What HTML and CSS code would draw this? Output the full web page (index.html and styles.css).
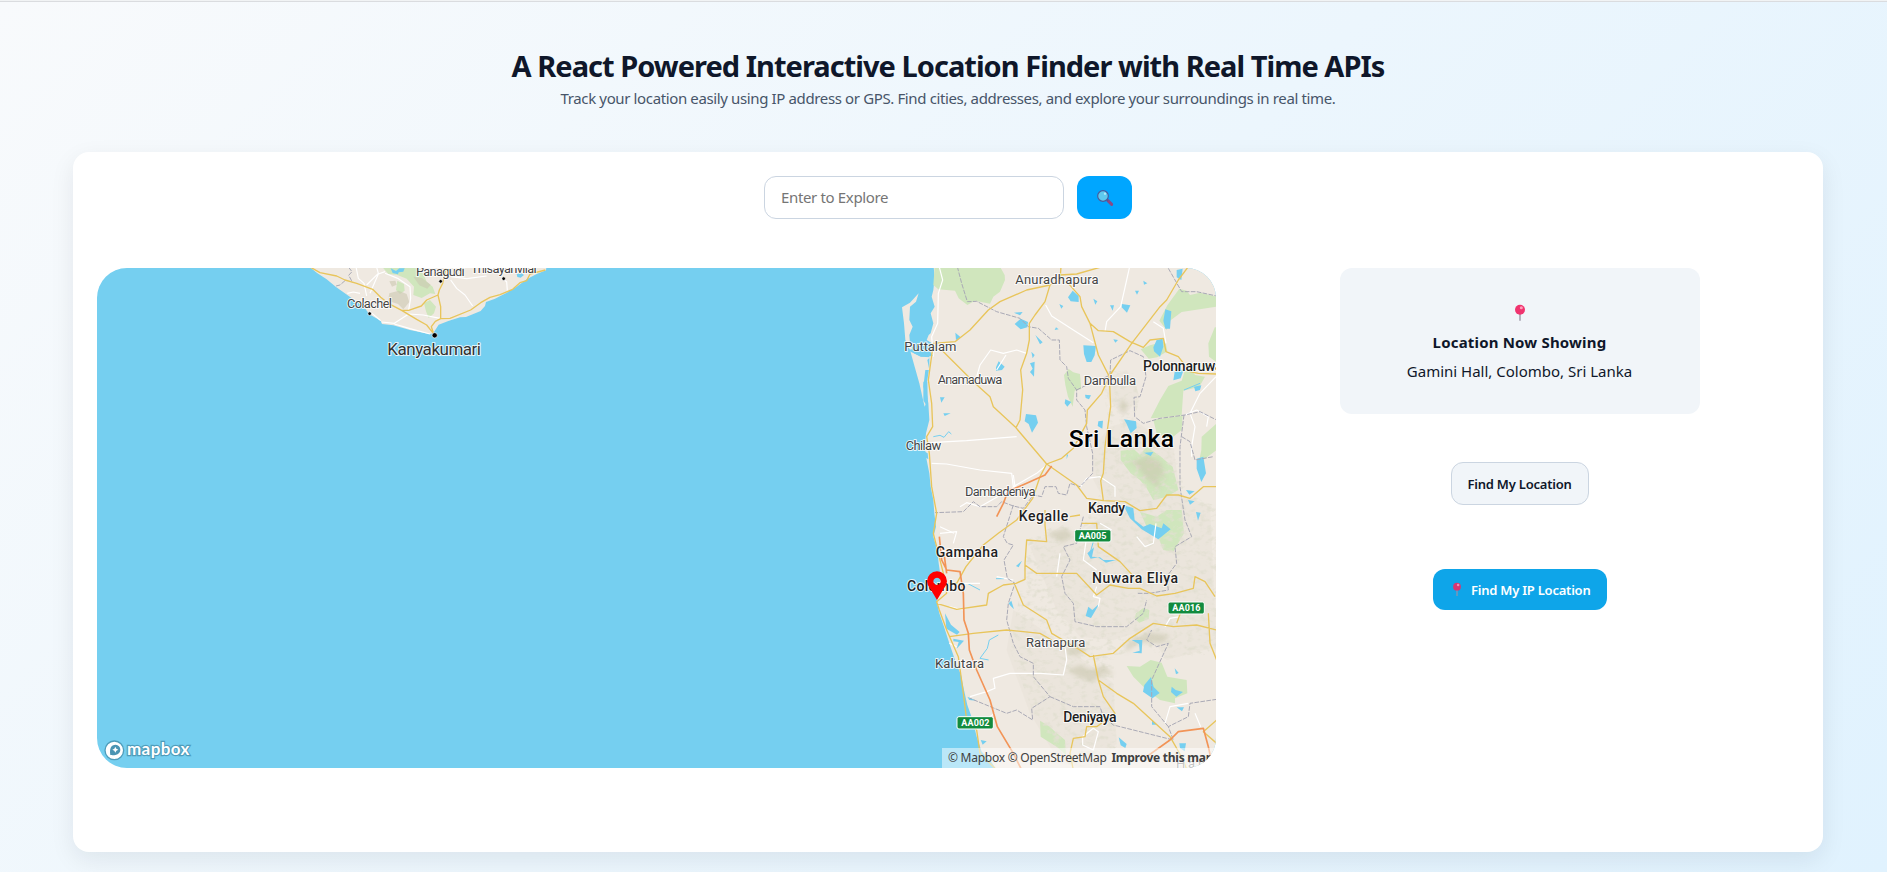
FILE: index.html
```html
<!DOCTYPE html>
<html lang="en">
<head>
<meta charset="utf-8">
<title>Location Finder</title>
<link rel="stylesheet" href="styles.css">
</head>
<body>
<main class="page">
  <header class="hero">
    <h1 class="hero-title">A React Powered Interactive Location Finder with Real Time APIs</h1>
    <p class="hero-sub">Track your location easily using IP address or GPS. Find cities, addresses, and explore your surroundings in real time.</p>
  </header>
  <section class="card">
    <form class="search">
      <input class="search-input" type="text" placeholder="Enter to Explore">
      <button class="search-btn" type="button" aria-label="Search">
        <svg width="18" height="18" viewBox="0 0 54 54"><path d="M35 34L47 46" stroke="#8a4a86" stroke-width="9" stroke-linecap="round"/><path d="M30 30l6 6" stroke="#4b5a98" stroke-width="4"/><circle cx="21" cy="21" r="16" fill="#5fc9ee" stroke="#4a5c9c" stroke-width="3.5"/><circle cx="27" cy="14" r="3.5" fill="#b5ecfb"/></svg>
      </button>
    </form>
    <div class="content">
      <div class="map">
        <svg class="map-canvas" width="1119" height="500" viewBox="0 0 1119 500">
          <defs>
            <filter id="soft" x="-20%" y="-20%" width="140%" height="140%"><feGaussianBlur stdDeviation="6"/></filter>
            <filter id="relief" x="0" y="0" width="100%" height="100%">
              <feTurbulence type="fractalNoise" baseFrequency=".05 .07" numOctaves="3" seed="8"/>
              <feColorMatrix values="0 0 0 0 .76  0 0 0 0 .74  0 0 0 0 .64  3 0 0 0 -1.45"/>
              <feComposite in2="SourceGraphic" operator="in"/>
            </filter>
          </defs>

          <!-- Southern India -->
          <g transform="translate(-37 -138) scale(.333333)">
            <path class="land" d="M748 410L770 428 800 448 828 471 862 495 890 515 915 535 928 553 962 572 966 582 1000 586 1050 600 1112 613 1122 606 1136 584 1165 573 1200 562 1218 561 1240 552 1262 543 1275 528 1278 516 1305 506 1340 488 1370 470 1400 448 1430 432 1458 421 1460 405Z"/>
            <path class="park" d="M966 410L985 432 1010 434 1040 446 1062 470 1060 495 1085 504 1110 490 1126 492 1118 470 1100 455 1090 432 1074 410ZM1012 452l20 10 2 20-14 10-12-12zM1092 520l18-10 18 20-6 20-16 14-8-20z"/>
            <path class="hill" d="M988 490l28-8 24 10 8 24-18 22-16-16-30-10zM1060 440l26 4 26 20-10 12-24-10zM988 454l18-2 4 12-14 6z"/>
            <path class="water" d="M992 415l16 8 10-8 16 0-4 10-14 2-2 6-16-4zM1370 432l14-3 8 6-10 8-10-2z"/>
            <path class="minor" d="M888 410L895 445 912 460 920 498M920 465L955 430 950 412M930 490L955 432 975 425M862 490L880 486 900 490M975 430L1015 446 1050 470 1052 505 1046 540M930 545L962 572M965 576L1003 580 1046 552M1003 582L1050 596 1110 612M1140 565L1090 555 1046 552M1172 450L1190 475 1215 495 1238 528M1174 440L1220 446 1280 438M1325 445L1340 455 1342 482"/>
            <path class="border" d="M866 412L876 425 866 436 878 458M855 452L840 465 828 468"/>
            <path class="road" d="M752 412L780 428 830 438 855 450 890 460 938 478 962 502 985 520 1025 541 1070 568 1100 585 1120 610M1158 412L1148 460 1138 480 1134 495 1142 530 1142 568M1134 495L1100 510 1084 528 1046 541 1025 541M1120 608L1114 590 1126 574 1142 566 1170 565 1232 540 1262 518 1290 502 1320 494 1358 478 1380 458 1400 452 1410 432 1456 420"/>
            <g class="dots"><circle cx="1142" cy="454" r="5.5"/><circle cx="1331" cy="446" r="5.5"/><circle cx="929" cy="551" r="5.5"/><circle cx="1124" cy="616" r="8"/></g>
            <g class="town">
              <text x="1068" y="438" textLength="146">Panagudi</text>
              <text x="1232" y="429" textLength="198">Thisayanvilai</text>
              <text x="861" y="535" textLength="135">Colachel</text>
              <text class="place-lg" x="982" y="675" textLength="281">Kanyakumari</text>
            </g>
          </g>

          <!-- Sri Lanka, drawn in one continuous coordinate space -->
          <g transform="translate(783 -8) scale(.333333)">
            <path class="land" d="M160 10L164 55 160 90 155 110 164 140 152 160 160 190 152 220 146 225 140 240 160 252 148 285 148 320 142 360 138 385 145 430 148 480 138 520 134 560 140 600 148 640 152 680 160 720 163 760 168 800 160 830 172 870 176 910 182 950 176 990 170 1025 178 1060 192 1100 208 1150 225 1200 243 1245 252 1290 262 1335 278 1380 290 1430 305 1475 330 1500 350 1530 1015 1530 1015 10Z"/>
            <path class="land" d="M116 100L108 125 90 140 88 180 98 200 88 225 90 250 102 280 125 290 150 292 142 300 148 330 136 330 130 380 142 420 134 440 128 415 118 370 104 320 90 270 76 240 72 190 66 142 90 128Z"/>
            <g class="hills">
              <path d="M690 500L760 480 880 560 900 700 990 740 1010 1160 860 1200 800 1110 700 1140 600 1130 530 1050 450 860 540 800 600 820 690 750 640 660 640 560Z"/>
              <path d="M400 1050L560 1160 700 1270 710 1450 650 1530 540 1510 450 1360 380 1170Z"/>
              <path d="M690 350l50-20 40 80-50 60-50-60z"/>
            </g>
            <path class="park" d="M164 20L160 75 175 88 225 92 236 115 262 135 285 122 330 131 340 110 360 95 375 60 374 45 360 20ZM1010 110L1008 140 905 156 868 184 860 210 838 182 862 136 898 86 920 92 930 105 960 98ZM782 268l28-12 46-12 6 30-30 18-26 4zM812 475L840 420 865 378 905 362 915 330 930 320 945 345 975 350 958 380 910 392 905 465 842 473ZM820 480L908 466 905 510 870 538 830 520ZM985 250l20-50 10 10v100l-28-20zM965 530l45-40v80l-40 30-16 20 10-50zM552 345l14-18 14 10 20 5 4 45-20 5-6 48-14-30-8-35z"/>
            <path class="park" d="M722 572L762 568 780 584 800 560 840 588 878 620 888 660 895 690 860 710 820 720 800 685 780 660 752 640 722 600ZM780 755L830 770 860 750 905 750 912 820 880 875 850 870 830 820 800 800ZM768 1060l22-16 18 6-2 26-28 12-14-12zM740 1218L780 1220 812 1200 845 1208 862 1250 920 1260 922 1300 885 1315 885 1330 840 1320 800 1290 760 1250ZM480 1382L510 1400 525 1415 555 1440 558 1485 530 1460 482 1430Z"/>
            <path filter="url(#relief)" d="M690 330L760 340 780 420 760 480 880 560 920 700 1010 740 1010 1180 860 1200 780 1150 700 1200 710 1460 640 1530 560 1510 460 1360 390 1170 430 940 440 840 540 790 600 820 660 700 640 600 690 500 670 400Z"/>
            <path class="shade" d="M745 610l60-22 40 20 10 55-20-20 5 45-40-30-35-45M720 420l24 10-10 30-14-10M560 1230l40-15 32 14 40-12 30 24-38 4-28 22-40-16zM500 820l60-14 20 22-34 20M590 1150l34 15-30 24-44-14zM740 1150l60-34 70 10-20 22-70 0-44 28z" filter="url(#soft)"/>
            <path class="water" d="M82 270l40 20 38-2-20-26zM348 322l8-18 18 16-8 10-18 2zM402 158l26-2-8 10zM404 192l18-16 22 10-2 16-20 6zM466 225l22 22-8 6zM610 256l38 2-4 28-10 20-14 0-8-24zM564 112l14-20 18 16 0 18-24-2zM725 132l26 4-10 22-16-16zM640 116l12 8-6 10zM538 132l12 6-6 8zM765 92l12 0-6 12zM790 62l12 8-10 4zM690 136l12 0-4 16zM850 182l6-34 18 6-4 52-14 0zM890 30l18-4-4 34-14-8zM820 262l10-22 18-4 2 24-10 30-18-16zM884 335l28-8-10 28-22 6zM942 380l22-4-4 14-14 4zM454 275l10 10-6 10zM450 310l14-5-2 45-12-14 8-10zM438 462l30 4 6 22-18 30-10-26-12-8zM556 418l18 8-12 14-8-10zM615 404l18 2-6 12-10-4zM655 484l14-2-2 24-14-8zM732 478l36 6 2 20-18 16-12-28zM226 218l16 14-14 8zM180 412l14 0-10 16zM190 460l22 0-18 8zM792 578l28-2-8 12zM950 596l20-6 8 50-14 26-14-40zM918 690l26 4-16 10zM924 720l20 4-14 10zM948 756l14 2-8 24zM528 202l8 6-12 2zM700 238l14 2-8 8zM560 580l4 6-4 12zM130 365l12 0 2 80-14-24zM125 570l18 10 2 18-12-8z"/>
            <path class="water" d="M730 735L760 745 764 780 790 800 810 792 845 805 850 790 872 808 835 838 785 808 750 775ZM622 880l20-18-6 28 24 2 10 8 38 0-30 8-24-16-22 4zM625 1040l12 10 22-20-26 44-16-6zM386 1030l8-8 8 26-12-12zM408 918l18-16-10 20zM755 1140l32 0-2 40-28-2 22-6-2-20zM793 1275l20-24 8 30 18 18-22 16-28-20zM884 1225l12 14-8 4zM875 1280l12 10 22 6-20 14-16-14zM890 1342l22 0-6 12zM716 1432l24 20-4 12-14-8zM816 1380l16 14-16 0zM898 1450l20 0-4 24-14-10zM302 1440l18 4-12 10zM195 1060l18 34 26 22-8 8-32-18zM220 1136l32 6-22 24 6-20-16-2zM262 1310l28 12-22-2z"/>
            <g class="stream"><path d="M326 1200L300 1195 322 1165 328 1140 355 1125M262 970L300 990M348 956L372 956M160 530L180 526 192 532 206 515 214 522M630 880L640 845M912 390L960 370M118 25L118 60"/></g>
            <path class="minor" d="M175 10L188 60 175 100 173 190 155 230 160 290M150 548L260 542 410 530M155 610L200 612 300 630 395 640 400 680 470 640 500 615M400 645L405 680 300 740 260 728 240 740M290 350L300 315 332 270 370 280 410 270 440 280M378 285L350 330M290 360M497 135L515 168 580 210 640 248M750 15L740 60 722 140 680 185 675 215M820 185L850 205 858 250M660 650L620 655 602 680M660 650L705 680 705 710M620 830L610 900 650 930M770 830L795 860 820 850 828 790M930 460L945 500 935 560 935 590M1008 350L960 400 930 460M915 465L950 450 985 470 980 500M180 820L230 815 220 850M180 800L222 820M350 950L400 960M300 970L240 970M208 1040L250 1050M208 1150L230 1160M270 1310L320 1295 345 1285 340 1255 390 1240 480 1240 550 1245 560 1200 556 1165M300 1390L345 1360M608 1430L640 1405 655 1415 640 1470 608 1455ZM855 1390L870 1340 925 1330M945 1360L962 1400M660 790L695 810M540 880L530 950M900 1070L870 1075 855 1100M650 980L640 1010 660 1015 655 1040"/>
            <path class="border" d="M232 20L245 70 262 125 290 124 350 155 420 175 445 200 475 205 515 240 538 240 540 300 560 320 565 355 590 390 590 420 615 450 620 500 638 580 638 640 600 680 570 670 560 705 535 700 528 680 495 680 485 710 460 705 430 745 400 738 365 725 350 740 300 740 280 725 250 755 165 758M590 390L630 370 670 355 690 345 692 300 750 272 790 290 798 350 780 410 762 412 764 470 790 490 840 475 915 465 960 455 1010 480M865 25L905 95 950 95 1010 108M905 530L930 545 945 600 1000 590M912 465L900 560 900 680 915 780 935 830 885 860 890 910 860 950 865 990 810 1000 770 1000M400 735L370 830 382 850 400 855 372 900 382 955 405 970 385 1030 380 1080 400 1150 420 1190 460 1210 460 1250 510 1310 455 1345 458 1380 410 1350 380 1360 270 1315M610 770L590 850 550 860 570 900 545 950 555 1000 580 1030 585 1085 650 1100 740 1100 790 1060 800 1020M510 1310L580 1340 660 1340 670 1370 700 1395 760 1410 880 1440 865 1400 925 1370 930 1330 1010 1318M865 1400L815 1340 815 1260 865 1150 830 1160 800 1140 815 1110"/>
            <path class="road" d="M543 20L540 60 510 75 440 90 360 125 325 150 270 210 225 245 160 250M540 45L590 42 660 22M510 75L495 125 465 165 448 190 448 240 440 280 422 330 428 390 420 480 408 503M565 70L600 110 605 140 630 190 655 285 688 350 692 440 675 560 670 640 662 662 670 722M630 190L655 212 700 215 750 245 790 262 810 240 850 235 858 275 895 290 930 335 955 340 1010 342M925 20L895 60 860 120 840 140 755 250 690 345 665 400 622 450 620 490 580 565 545 595 500 612 480 650 458 715 410 780 355 820 310 855 258 920 230 970 205 970M185 270L285 370 330 410 340 440 405 500 500 612 590 675 620 715 670 722 735 725 780 752 830 745 860 705 895 705 930 715 970 680 1010 680M160 250L145 360 155 430 158 500 140 530 148 580 155 680 170 760 160 820 175 880 190 940 200 1000 170 1025 178 1050 200 1110 235 1190 250 1300 260 1380 290 1410 300 1480 350 1530M170 1030L230 1048 320 1035 325 1000 370 975 408 970 435 958 435 910 440 840 500 845 495 795 495 750M435 915L470 940 590 940 650 1005 690 975 745 985 780 985 830 1008 885 1000 940 985 945 950 975 965 1005 1010M605 790L650 790 655 860 720 905 780 970M570 770L600 765M405 975L430 1035 500 1080 515 1120 600 1170 630 1190 700 1180 750 1135 820 1090 880 1100 950 1095 1010 1110M890 1090L905 1050M640 1185L655 1260 710 1300 760 1330 815 1380 870 1430 910 1500 920 1530M655 1260L670 1310 705 1360 650 1400 620 1400 615 1430 580 1435 570 1480 580 1530M208 1130L280 1120 380 1110 480 1120 515 1140M985 1060L990 1150 1010 1200M1010 1380L970 1415 1010 1450"/>
            <path class="trunk" d="M515 618L495 645 440 670 405 685 385 690 370 730 350 770M178 830L185 900 200 930 240 935 250 1000 252 1080 265 1120 268 1170 290 1230 330 1320 352 1400 400 1480 425 1530M192 880L200 940M800 1490L870 1440 895 1415 970 1405 985 1460 1000 1530"/>
            <g class="town">
              <text x="406" y="72" textLength="250">Anuradhapura</text>
              <text x="73" y="272" textLength="156">Puttalam</text>
              <text x="173" y="373" textLength="194">Anamaduwa</text>
              <text x="611" y="374" textLength="157">Dambulla</text>
              <text x="77" y="570" textLength="107">Chilaw</text>
              <text x="255" y="708" textLength="212">Dambadeniya</text>
              <text x="438" y="1160" textLength="178">Ratnapura</text>
              <text x="165" y="1225" textLength="147">Kalutara</text>
              <text class="faint" x="888" y="1525" textLength="100">Ham</text>
            </g>
            <g class="city">
              <text x="789" y="334" textLength="239">Polonnaruwa</text>
              <text x="624" y="759" textLength="111">Kandy</text>
              <text x="416" y="784" textLength="149">Kegalle</text>
              <text x="167" y="891" textLength="187">Gampaha</text>
              <text x="81" y="993" textLength="175">Colombo</text>
              <text x="636" y="970" textLength="258">Nuwara Eliya</text>
              <text x="550" y="1385" textLength="160">Deniyaya</text>
            </g>
            <text class="country" x="566" y="562" textLength="316">Sri Lanka</text>
            <g class="shield">
              <rect x="584" y="809" width="109" height="37" rx="6"/><text x="596" y="837" textLength="83">AA005</text>
              <rect x="864" y="1026" width="109" height="36" rx="6"/><text x="877" y="1053" textLength="84">AA016</text>
              <rect x="231" y="1370" width="109" height="37" rx="6"/><text x="244" y="1398" textLength="84">AA002</text>
            </g>
            <path class="pin" d="M171 1020L150 985Q141 974 141 964A30 30 0 0 1 201 964Q201 974 192 985ZM171 953a11 11 0 1 0 .1 0z"/>
          </g>

          <!-- Mapbox wordmark -->
          <g class="logo" transform="translate(-17 432) scale(.333333)">
            <circle class="logo-ring" cx="103" cy="151" r="28"/>
            <path class="logo-mark" d="M91 165C88 145 93 134 107 134A15 15 0 0 1 121 149C121 162 107 167 91 165Z"/>
            <path class="logo-star" d="M106 140l3 6 6 3-6 3-3 6-3-6-6-3 6-3z"/>
            <text x="141" y="166" textLength="187">mapbox</text>
          </g>
        </svg>
        <div class="attribution">© Mapbox © OpenStreetMap <b>Improve this map</b></div>
      </div>
      <aside class="side">
        <div class="info">
          <svg class="pushpin" width="16" height="18" viewBox="0 0 48 54"><path d="M24 24V50" stroke="#a9a4b3" stroke-width="5"/><circle cx="24" cy="17" r="15" fill="#f0346f"/><circle cx="28" cy="11" r="4.5" fill="#ff9dba"/></svg>
          <strong class="info-title">Location Now Showing</strong>
          <span class="info-place">Gamini Hall, Colombo, Sri Lanka</span>
        </div>
        <button class="btn btn-plain" type="button">Find My Location</button>
        <button class="btn btn-primary" type="button"><svg width="14" height="15" viewBox="0 0 48 54"><path d="M24 24V50" stroke="#8195b4" stroke-width="5"/><circle cx="24" cy="17" r="14" fill="#d83672"/><circle cx="28" cy="11" r="4.5" fill="#f48fb4"/></svg><span>Find My IP Location</span></button>
      </aside>
    </div>
  </section>
</main>
</body>
</html>
```
FILE: styles.css
```css
* { box-sizing: border-box; }
body {
  margin: 0;
  height: 872px;
  overflow: hidden;
  font-family: "Noto Sans", "Open Sans", sans-serif;
  color: #0f172a;
  background: linear-gradient(135deg, #f8fafc 0%, #e0f2fe 100%);
}
.page { height: 872px; border-top: 1px solid #f1f3f4; padding: 0 64px 0 73px; display: flex; flex-direction: column; align-items: center; box-shadow: inset 0 1px #dadcdf; }
.hero { height: 151px; padding-top: 43px; text-align: center; white-space: nowrap; }
.hero-title { margin: 0; font-size: 29px; line-height: 43px; font-weight: 700; letter-spacing: -.97px; }
.hero-sub { margin: 0; font-size: 15px; line-height: 22px; color: #475569; letter-spacing: -.37px; }
.card { width: 1750px; height: 700px; padding: 24px; border-radius: 16px; background: #fff; box-shadow: 0 8px 24px rgba(15, 23, 42, .08); }
.search { display: flex; justify-content: center; gap: 13px; height: 43px; }
.search-input { width: 300px; height: 43px; padding: 0 16px 2px; border: 1px solid #cbd5e1; border-radius: 12px; font: 15px "Noto Sans", sans-serif; letter-spacing: -.35px; background: #fff; }
.search-input::placeholder { color: #757575; opacity: 1; }
.search-btn { width: 55px; height: 43px; padding: 0; border: 0; border-radius: 12px; background: #00a6ff; display: flex; align-items: center; justify-content: center; }
.content { display: flex; margin-top: 49px; }
.map { position: relative; width: 1119px; height: 500px; border-radius: 30px; overflow: hidden; background: #75cff0; }
.map-canvas { display: block; font-family: Roboto, sans-serif; }
.land { fill: #efe9e1; }
.park { fill: #d0e6bd; }
.hill, .shade { fill: #cbc8b0; opacity: .6; }
.hills { fill: #e8e2d7; opacity: .5; }
.water { fill: #75cff0; }
.minor, .road, .trunk, .border, .stream { fill: none; stroke-linejoin: round; }
.minor { stroke: #fff; stroke-width: 3.5; }
.road { stroke: #e8c55b; stroke-width: 4; }
.trunk { stroke: #f29457; stroke-width: 5; }
.border { stroke: #a9a9b5; stroke-width: 3; stroke-dasharray: 14 4; }
.stream { stroke: #75cff0; stroke-width: 3; }
.dots { fill: #000; stroke: #fff; stroke-width: 2; }
.town text, .city text, .country { paint-order: stroke; stroke: rgba(255, 255, 255, .8); stroke-width: 6px; stroke-linejoin: round; }
.town { font-size: 39px; fill: #444; }
.town .place-lg { font-size: 51px; fill: #333; }
.town .faint { fill: #888; }
.city { font-size: 42px; font-weight: 500; fill: #1f1f1f; }
.country { font-size: 74px; font-weight: 500; fill: #000; }
.shield rect { fill: #128b3e; stroke: #fff; stroke-width: 3; }
.shield text { font-size: 27px; font-weight: 700; fill: #fff; }
.pin { fill: #f00; fill-rule: evenodd; }
.logo-ring { fill: #fff; stroke: #4f9dbb; stroke-width: 4; }
.logo-mark { fill: #4a94b3; }
.logo-star { fill: #fff; }
.logo text { font: 700 51px Lato, sans-serif; fill: #fff; paint-order: stroke; stroke: #4f9dbb; stroke-width: 7px; }
.attribution { position: absolute; right: 0; bottom: 0; width: 274px; height: 20px; padding-left: 6px; font: 12px/20px "Noto Sans", sans-serif; letter-spacing: -.25px; white-space: nowrap; overflow: hidden; color: #404040; background: rgba(255, 255, 255, .5); }
.attribution b { margin-left: 2px; }
.side { flex: 1; padding-left: 24px; display: flex; flex-direction: column; align-items: center; }
.info { width: 360px; height: 146px; padding-top: 36px; border-radius: 12px; background: #f1f5f9; display: flex; flex-direction: column; align-items: center; }
.info-title { margin-top: 7px; font-size: 15px; line-height: 26px; letter-spacing: .18px; }
.info-place { margin-top: 3px; font-size: 15px; line-height: 26px; }
.btn { border-radius: 12px; font: 600 13px "Noto Sans", sans-serif; letter-spacing: -.22px; padding: 0; white-space: nowrap; display: flex; align-items: center; justify-content: center; }
.btn-plain { width: 138px; height: 43px; margin-top: 48px; color: #0f172a; background: #f1f5f9; border: 1px solid #cbd5e1; }
.btn-primary { width: 174px; height: 41px; margin-top: 64px; padding-right: 16px; justify-content: flex-end; gap: 7px; color: #fff; background: #0ea5e9; border: 0; }
```
